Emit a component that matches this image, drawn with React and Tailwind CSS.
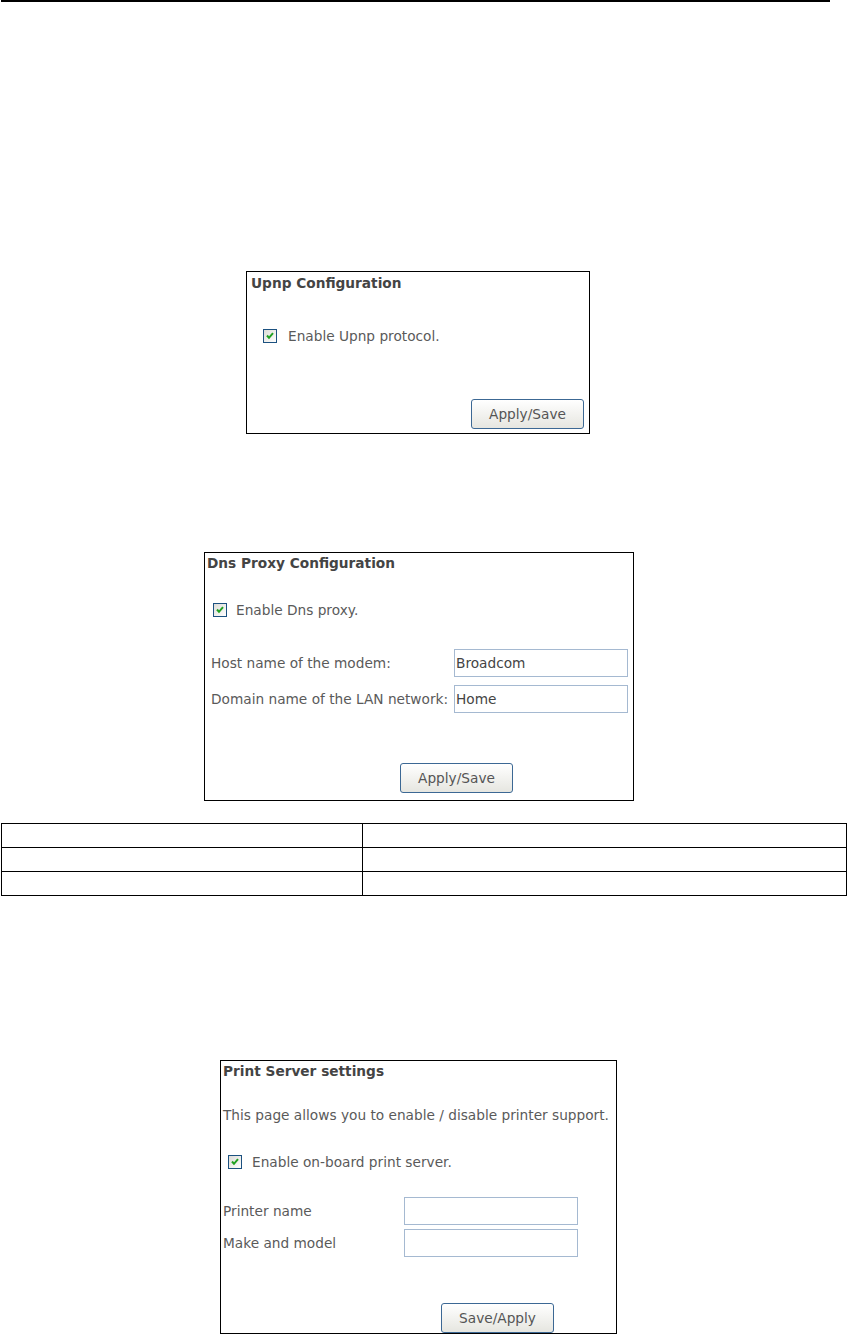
const font = { fontFamily: '"DejaVu Sans", Verdana, sans-serif' };

function Check() {
  return (
    <span className="inline-flex h-[14px] w-[14px] shrink-0 items-center justify-center border border-[#1c5180] bg-gradient-to-br from-[#dcdcd7] to-white">
      <svg width="10" height="10" viewBox="0 0 10 10">
        <path d="M2 4.5 L4 6.8 L8 2.2" fill="none" stroke="#21a121" strokeWidth="2" />
      </svg>
    </span>
  );
}

function Btn({ children }) {
  return (
    <button className="h-[30px] w-[113px] rounded-[3px] border border-[#3c6894] bg-gradient-to-b from-white to-[#e6e6e0] text-[13.7px] leading-[16px] text-[#555]">
      {children}
    </button>
  );
}

function Field({ value }) {
  return (
    <div className="flex h-[28px] w-[174px] items-center border border-[#a5b9d1] bg-white pl-[1px] text-[13.7px] text-[#444]">
      {value}
    </div>
  );
}

export default function App() {
  return (
    <div className="w-[848px] bg-white text-[13.7px] leading-[16px] text-[#5a5a5a]" style={font}>
      {/* Page rule */}
      <div className="ml-[1px] h-[2px] w-[829px] bg-black"></div>

      {/* Upnp */}
      <div className="ml-[246px] mt-[269px] flex h-[163px] w-[344px] flex-col border border-black">
        <div className="pl-[4px] pt-[3px] font-bold text-[#444]">Upnp Configuration</div>
        <div className="ml-[16px] mt-[37px] flex items-center gap-[11px]">
          <Check />
          <span>Enable Upnp protocol.</span>
        </div>
        <div className="mt-auto mb-[4px] mr-[5px] flex justify-end">
          <Btn>Apply/Save</Btn>
        </div>
      </div>

      {/* Dns proxy */}
      <div className="ml-[204px] mt-[118px] flex h-[249px] w-[430px] flex-col border border-black">
        <div className="pl-[2px] pt-[2px] font-bold text-[#444]">Dns Proxy Configuration</div>
        <div className="ml-[8px] mt-[31px] flex items-center gap-[9px]">
          <Check />
          <span>Enable Dns proxy.</span>
        </div>
        <div className="mt-[31px] flex flex-col gap-[8px] pl-[6px]">
          <div className="flex items-center">
            <span className="w-[243px]">Host name of the modem:</span>
            <Field value="Broadcom" />
          </div>
          <div className="flex items-center">
            <span className="w-[243px]">Domain name of the LAN network:</span>
            <Field value="Home" />
          </div>
        </div>
        <div className="mt-auto mb-[7px] ml-[195px] flex">
          <Btn>Apply/Save</Btn>
        </div>
      </div>

      {/* Table */}
      <table className="ml-[1px] mt-[22px] w-[846px] border-collapse">
        <tbody>
          {[0, 1, 2].map((i) => (
            <tr key={i} className="h-[24px]">
              <td className="w-[361px] border border-black"></td>
              <td className="border border-black"></td>
            </tr>
          ))}
        </tbody>
      </table>

      {/* Print server */}
      <div className="ml-[220px] mt-[164px] flex h-[274px] w-[397px] flex-col border border-black">
        <div className="pl-[2px] pt-[2px] font-bold text-[#444]">Print Server settings</div>
        <div className="mt-[28px] pl-[2px]">This page allows you to enable / disable printer support.</div>
        <div className="ml-[7px] mt-[31px] flex items-center gap-[10px]">
          <Check />
          <span>Enable on-board print server.</span>
        </div>
        <div className="mt-[27px] flex flex-col gap-[4px] pl-[2px]">
          <div className="flex items-center">
            <span className="w-[181px]">Printer name</span>
            <Field value="" />
          </div>
          <div className="flex items-center">
            <span className="w-[181px]">Make and model</span>
            <Field value="" />
          </div>
        </div>
        <div className="mt-auto ml-[220px] flex">
          <Btn>Save/Apply</Btn>
        </div>
      </div>
    </div>
  );
}
